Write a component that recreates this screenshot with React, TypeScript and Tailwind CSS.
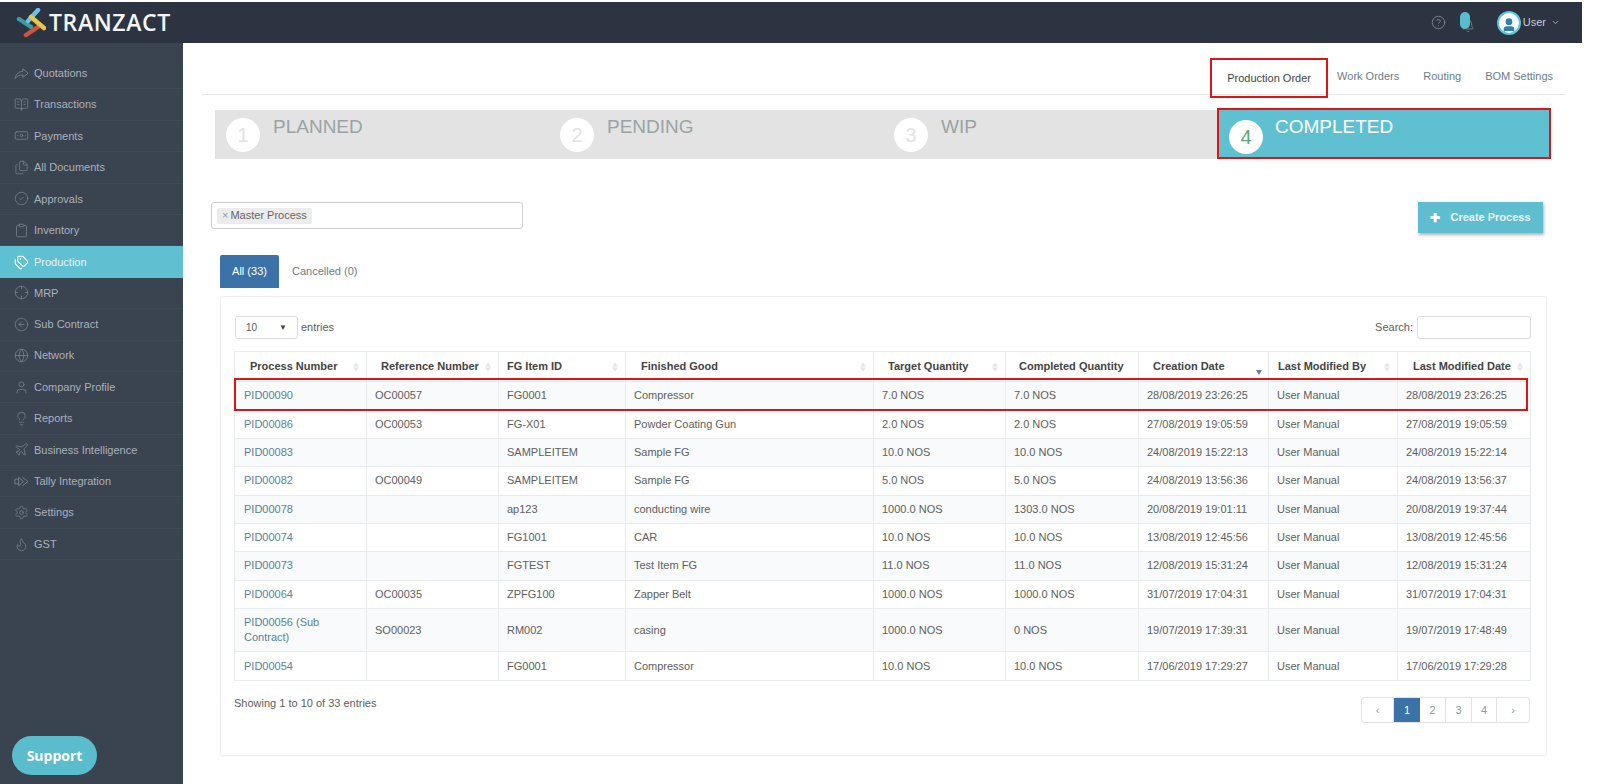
import {
  Banknote,
  Bell,
  BookOpenText,
  ChevronDown,
  CircleArrowLeft,
  CircleCheck,
  CircleHelp,
  Clipboard,
  Crosshair,
  Files,
  Flame,
  Globe,
  Lightbulb,
  Plane,
  Settings,
  Tags,
  User,
} from 'lucide-react';
import type { ReactNode } from 'react';

const iconCls = 'h-[15px] w-[15px]';

function TallyIcon() {
  return (
    <svg viewBox="0 0 16 12" className={iconCls} fill="none" stroke="currentColor" strokeWidth="1">
      <path d="M1 3.5h4M1 8.5h4M1 3.5v5" />
      <path d="M5 1.5 L10 6 L5 10.5 Z" />
      <path d="M9 1.5 L15 6 L9 10.5" />
    </svg>
  );
}

function ShareIcon() {
  return (
    <svg viewBox="0 0 16 16" className={iconCls} fill="none" stroke="currentColor" strokeWidth="1" strokeLinejoin="round">
      <path d="M9.5 3 L15 7.7 L9.5 12.2 V9.6 C5.8 9.5 3.2 10.6 1.2 13.4 C1.8 9 4.6 6 9.5 5.6 Z" />
    </svg>
  );
}

const navItems: { label: string; icon: ReactNode; active?: boolean }[] = [
  { label: 'Quotations', icon: <ShareIcon /> },
  { label: 'Transactions', icon: <BookOpenText className={iconCls} strokeWidth={1.25} /> },
  { label: 'Payments', icon: <Banknote className={iconCls} strokeWidth={1.25} /> },
  { label: 'All Documents', icon: <Files className={iconCls} strokeWidth={1.25} /> },
  { label: 'Approvals', icon: <CircleCheck className={iconCls} strokeWidth={1.25} /> },
  { label: 'Inventory', icon: <Clipboard className={iconCls} strokeWidth={1.25} /> },
  { label: 'Production', icon: <Tags className={iconCls} strokeWidth={1.75} />, active: true },
  { label: 'MRP', icon: <Crosshair className={iconCls} strokeWidth={1.25} /> },
  { label: 'Sub Contract', icon: <CircleArrowLeft className={iconCls} strokeWidth={1.25} /> },
  { label: 'Network', icon: <Globe className={iconCls} strokeWidth={1.25} /> },
  { label: 'Company Profile', icon: <User className={iconCls} strokeWidth={1.25} /> },
  { label: 'Reports', icon: <Lightbulb className={iconCls} strokeWidth={1.25} /> },
  { label: 'Business Intelligence', icon: <Plane className={iconCls} strokeWidth={1.25} /> },
  { label: 'Tally Integration', icon: <TallyIcon /> },
  { label: 'Settings', icon: <Settings className={iconCls} strokeWidth={1.25} /> },
  { label: 'GST', icon: <Flame className={iconCls} strokeWidth={1.25} /> },
];

const columns = [
  { title: 'Process Number', width: 'w-[132px]', pad: 'pl-[15px]' },
  { title: 'Reference Number', width: 'w-[132px]', pad: 'pl-[14px]' },
  { title: 'FG Item ID', width: 'w-[127px]', pad: 'pl-[8px]' },
  { title: 'Finished Good', width: 'w-[248px]', pad: 'pl-[15px]' },
  { title: 'Target Quantity', width: 'w-[132px]', pad: 'pl-[14px]' },
  { title: 'Completed Quantity', width: 'w-[133px]', pad: 'pl-[13px]' },
  { title: 'Creation Date', width: 'w-[130px]', pad: 'pl-[14px]', sorted: true },
  { title: 'Last Modified By', width: 'w-[129px]', pad: 'pl-[9px]' },
  { title: 'Last Modified Date', width: 'w-[133px]', pad: 'pl-[15px]' },
];

const rows = [
  ['PID00090', 'OC00057', 'FG0001', 'Compressor', '7.0 NOS', '7.0 NOS', '28/08/2019 23:26:25', 'User Manual', '28/08/2019 23:26:25'],
  ['PID00086', 'OC00053', 'FG-X01', 'Powder Coating Gun', '2.0 NOS', '2.0 NOS', '27/08/2019 19:05:59', 'User Manual', '27/08/2019 19:05:59'],
  ['PID00083', '', 'SAMPLEITEM', 'Sample FG', '10.0 NOS', '10.0 NOS', '24/08/2019 15:22:13', 'User Manual', '24/08/2019 15:22:14'],
  ['PID00082', 'OC00049', 'SAMPLEITEM', 'Sample FG', '5.0 NOS', '5.0 NOS', '24/08/2019 13:56:36', 'User Manual', '24/08/2019 13:56:37'],
  ['PID00078', '', 'ap123', 'conducting wire', '1000.0 NOS', '1303.0 NOS', '20/08/2019 19:01:11', 'User Manual', '20/08/2019 19:37:44'],
  ['PID00074', '', 'FG1001', 'CAR', '10.0 NOS', '10.0 NOS', '13/08/2019 12:45:56', 'User Manual', '13/08/2019 12:45:56'],
  ['PID00073', '', 'FGTEST', 'Test Item FG', '11.0 NOS', '11.0 NOS', '12/08/2019 15:31:24', 'User Manual', '12/08/2019 15:31:24'],
  ['PID00064', 'OC00035', 'ZPFG100', 'Zapper Belt', '1000.0 NOS', '1000.0 NOS', '31/07/2019 17:04:31', 'User Manual', '31/07/2019 17:04:31'],
  ['PID00056 (Sub Contract)', 'SO00023', 'RM002', 'casing', '1000.0 NOS', '0 NOS', '19/07/2019 17:39:31', 'User Manual', '19/07/2019 17:48:49'],
  ['PID00054', '', 'FG0001', 'Compressor', '10.0 NOS', '10.0 NOS', '17/06/2019 17:29:27', 'User Manual', '17/06/2019 17:29:28'],
];

const steps = ['PLANNED', 'PENDING', 'WIP', 'COMPLETED'];

function Logo() {
  return (
    <svg viewBox="0 0 30 30" className="h-[30px] w-[30px]" fill="none" strokeLinecap="round" strokeWidth="4.5">
      <path d="M3 11 L15 19" stroke="#3e9aa0" />
      <path d="M12 13 L22 2" stroke="#6cc0e0" />
      <path d="M10 27 L22 19" stroke="#cf5440" />
      <path d="M15 9 L28 20" stroke="#e7c64c" />
    </svg>
  );
}

function SortArrows({ sorted }: { sorted?: boolean }) {
  if (sorted) {
    return <span className="absolute bottom-[6px] right-[6px] h-0 w-0 border-x-[3.5px] border-t-[5px] border-x-transparent border-t-[#5f7fb0]" />;
  }
  return (
    <span className="absolute right-[7px] top-1/2 flex -translate-y-1/2 flex-col gap-[1px]">
      <span className="h-0 w-0 border-x-[3px] border-b-[4px] border-x-transparent border-b-[#e3e6e9]" />
      <span className="h-0 w-0 border-x-[3px] border-t-[4px] border-x-transparent border-t-[#e3e6e9]" />
    </span>
  );
}

function Sidebar() {
  return (
    <aside className="flex w-[183px] shrink-0 flex-col bg-[#3a4350] pt-[15px] text-[11px]">
      {navItems.map((item) => (
        <div
          key={item.label}
          className={
            item.active
              ? 'flex h-[31.4px] items-center gap-[5px] bg-[#5fc0d2] pl-[14px] text-[#e8f5f8]'
              : 'flex h-[31.4px] items-center gap-[5px] border-b border-[#414a57] pl-[14px] text-[#aab1bb]'
          }
        >
          <span className={item.active ? 'text-white' : 'text-[#78818d]'}>{item.icon}</span>
          <span>{item.label}</span>
        </div>
      ))}
      <div className="mt-auto mb-[9px] ml-[12px] flex h-[39px] w-[85px] items-center justify-center rounded-full bg-[#5bbccd] font-['Open_Sans',sans-serif] text-[14px] font-bold text-white">
        Support
      </div>
    </aside>
  );
}

function Header() {
  return (
    <header className="mt-[2px] flex h-[41px] w-[1582px] shrink-0 items-center bg-[#2b3440] pl-[16px] text-white">
      <Logo />
      <span className="ml-[3px] font-['Open_Sans',sans-serif] text-[23px] font-semibold tracking-[0.6px] text-[#f2f4f5]">TRANZACT</span>
      <div className="ml-auto flex items-center pr-[22px]">
        <CircleHelp className="h-[15px] w-[15px] text-[#8b939c]" strokeWidth={1.25} />
        <span className="relative ml-[14px] h-[21px] w-[16px]">
          <Bell className="absolute bottom-0 left-[1px] h-[14px] w-[14px] text-[#8b939c]" strokeWidth={1.25} />
          <span className="absolute left-0 top-0 h-[17px] w-[10px] rounded-full bg-[#5bbccd]" />
        </span>
        <span className="ml-[21px] flex h-[24px] w-[24px] items-end justify-center overflow-hidden rounded-full border-[2px] border-[#5bc4dc] bg-white">
          <User className="h-[16px] w-[16px] fill-[#2f7fb0] text-[#2f7fb0]" />
        </span>
        <span className="ml-[2px] text-[11px] text-[#c8ced4]">User</span>
        <ChevronDown className="ml-[5px] h-[9px] w-[9px] text-[#c8ced4]" />
      </div>
    </header>
  );
}

export default function App() {
  return (
    <div className="flex h-[784px] w-[1600px] flex-col overflow-hidden bg-white font-['Liberation_Sans',Arial,sans-serif]">
      <Header />
      <div className="flex min-h-0 flex-1">
        <Sidebar />
        <main className="flex min-w-0 flex-1 flex-col pl-[32px] text-[11px] text-[#606060]">
          {/* top tabs */}
          <nav className="mr-[35px] ml-[-13px] flex h-[52px] items-end justify-end border-b border-[#e8e8e8] pr-[12px]">
            <div className="mb-[-4px] flex h-[40px] w-[118px] items-center justify-center border-2 border-[#e01414] text-[#444]">Production Order</div>
            <div className="flex h-[36px] items-center gap-[24px] pl-[9px] text-[#6b7d8c]">
              <span>Work Orders</span>
              <span>Routing</span>
              <span>BOM Settings</span>
            </div>
          </nav>

          {/* stepper */}
          <div className="mt-[15px] flex h-[49px] w-[1336px] items-start bg-[#e3e3e3]">
            {steps.map((step, i) =>
              i === 3 ? (
                <div key={step} className="mt-[-2px] flex h-[51px] flex-1 items-start gap-[12px] border-2 border-[#e01414] bg-[#5fc0d2] pl-[10px] pt-[10px]">
                  <span className="flex h-[34px] w-[34px] items-center justify-center rounded-full bg-white text-[20px] text-[#5aa877]">{i + 1}</span>
                  <span className="mt-[-5px] text-[19px] leading-[24px] text-white">{step}</span>
                </div>
              ) : (
                <div key={step} className="flex w-[334px] items-start gap-[13px] pl-[11px] pt-[8px]">
                  <span className="flex h-[34px] w-[34px] items-center justify-center rounded-full bg-white text-[20px] text-[#e3e3e3]">{i + 1}</span>
                  <span className="mt-[-3px] text-[19px] leading-[24px] text-[#9aa3a3]">{step}</span>
                </div>
              ),
            )}
          </div>

          {/* filter + create */}
          <div className="mt-[43px] flex h-[31px] items-start justify-between pr-[57px]">
            <div className="ml-[-4px] flex h-[27px] w-[312px] items-center rounded-[3px] border border-[#cfcfcf] pl-[5px]">
              <span className="flex h-[16px] items-center gap-[2px] rounded-[2px] bg-[#ececec] px-[5px] text-[#666]">
                <span className="text-[#999]">×</span> Master Process
              </span>
            </div>
            <button className="flex h-[31px] w-[125px] items-center justify-center gap-[10px] bg-[#5fbdd0] text-[11px] font-bold text-[#e8f6f9] shadow-[1px_2px_3px_rgba(0,0,0,0.3)]">
              <span className="text-[12px] leading-none text-white">✚</span> Create Process
            </button>
          </div>

          {/* status tabs */}
          <div className="mt-[22px] ml-[5px] flex items-center">
            <span className="flex h-[33px] w-[59px] items-center justify-center rounded-t-[2px] bg-[#3b72a8] text-white">All (33)</span>
            <span className="ml-[13px] text-[#6b7d8c]">Cancelled (0)</span>
          </div>

          {/* table card */}
          <section className="mt-[8px] ml-[5px] flex h-[460px] w-[1327px] flex-col rounded-[3px] border border-[#eeeeee] px-[13px] shadow-[0_1px_2px_rgba(0,0,0,0.03)]">
            <div className="mt-[19px] flex h-[23px] items-center justify-between pr-[2px]">
              <div className="ml-[1px] flex items-center gap-[3px]">
                <div className="flex h-[23px] w-[63px] items-center justify-between rounded-[3px] border border-[#ddd] px-[10px] text-[10px]">
                  10 <span className="text-[8px] text-[#444]">▼</span>
                </div>
                <span>entries</span>
              </div>
              <div className="flex items-center gap-[4px]">
                <span>Search:</span>
                <div className="h-[23px] w-[114px] rounded-[3px] border border-[#ddd]" />
              </div>
            </div>

            <div className="relative mt-[12px]">
              <table className="w-[1296px] table-fixed border-collapse border border-[#e9ecef]">
                <colgroup>
                  {columns.map((c) => (
                    <col key={c.title} className={c.width} />
                  ))}
                </colgroup>
                <thead>
                  <tr className="h-[30px]">
                    {columns.map((c) => (
                      <th key={c.title} className={`relative border border-[#e9ecef] text-left font-bold text-[#444] ${c.pad}`}>
                        {c.title}
                        {c.title !== 'Completed Quantity' && <SortArrows sorted={c.sorted} />}
                      </th>
                    ))}
                  </tr>
                </thead>
                <tbody>
                  {rows.map((row, r) => (
                    <tr key={row[0]} className={r % 2 === 0 ? 'bg-[#f8fafc]' : 'bg-white'}>
                      {row.map((cell, c) => (
                        <td
                          key={c}
                          className={c === 0 ? 'border border-[#e9ecef] py-[6.2px] pl-[9px] pr-[12px] leading-[15px] text-[#5a8299]' : 'border border-[#e9ecef] pl-[8px] leading-[15px]'}
                        >
                          {cell}
                        </td>
                      ))}
                    </tr>
                  ))}
                </tbody>
              </table>
              {/* red highlight over the first row */}
              <div className="pointer-events-none absolute left-0 top-[27px] h-[33px] w-[1294px] border-2 border-[#e01414]" />
            </div>

            <div className="mt-[10px] flex items-start justify-between pr-[3px]">
              <span className="mt-[4px]">Showing 1 to 10 of 33 entries</span>
              <div className="mt-[6px] flex h-[26px] overflow-hidden rounded-[3px] border border-[#e3e3e3] text-[#8a9aa8]">
                <span className="flex w-[32px] items-center justify-center border-r border-[#e3e3e3]">‹</span>
                <span className="flex w-[26px] items-center justify-center bg-[#3b72a8] text-white">1</span>
                <span className="flex w-[26px] items-center justify-center border-r border-[#e3e3e3]">2</span>
                <span className="flex w-[26px] items-center justify-center border-r border-[#e3e3e3]">3</span>
                <span className="flex w-[25px] items-center justify-center border-r border-[#e3e3e3]">4</span>
                <span className="flex w-[32px] items-center justify-center">›</span>
              </div>
            </div>
          </section>
        </main>
      </div>
    </div>
  );
}
